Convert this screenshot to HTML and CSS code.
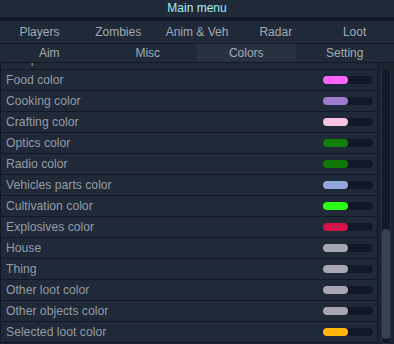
FILE: index.html
```html
<!DOCTYPE html>
<html>
<head>
	<title>Main menu</title>
	<link rel="stylesheet" href="styles.css">
</head>
<body>
	<div id="title">Main menu</div>

	<div class="tabs tabs_top">
		<div class="tab">Players</div>
		<div class="tab">Zombies</div>
		<div class="tab">Anim &amp; Veh</div>
		<div class="tab">Radar</div>
		<div class="tab">Loot</div>
	</div>
	<div class="tabs tabs_bottom">
		<div class="tab">Aim</div>
		<div class="tab">Misc</div>
		<div class="tab active">Colors</div>
		<div class="tab">Setting</div>
	</div>

	<div id="panel">
		<div id="list">
			<div class="row"><span>Weapon color</span><span class="track"><span class="fill" style="background:#d0d0d0"></span></span></div>
			<div class="row"><span>Food color</span><span class="track"><span class="fill" style="background:#ff66f7"></span></span></div>
			<div class="row"><span>Cooking color</span><span class="track"><span class="fill" style="background:#9b7ccc"></span></span></div>
			<div class="row"><span>Crafting color</span><span class="track"><span class="fill" style="background:#f7c3e3"></span></span></div>
			<div class="row"><span>Optics color</span><span class="track"><span class="fill" style="background:#137f0a"></span></span></div>
			<div class="row"><span>Radio color</span><span class="track"><span class="fill" style="background:#107a08"></span></span></div>
			<div class="row"><span>Vehicles parts color</span><span class="track"><span class="fill" style="background:#8ea6d8"></span></span></div>
			<div class="row"><span>Cultivation color</span><span class="track"><span class="fill" style="background:#2cfb12"></span></span></div>
			<div class="row"><span>Explosives color</span><span class="track"><span class="fill" style="background:#d6124c"></span></span></div>
			<div class="row"><span>House</span><span class="track"><span class="fill" style="background:#a9a6b4"></span></span></div>
			<div class="row"><span>Thing</span><span class="track"><span class="fill" style="background:#a9a6b4"></span></span></div>
			<div class="row"><span>Other loot color</span><span class="track"><span class="fill" style="background:#a9a6b4"></span></span></div>
			<div class="row"><span>Other objects color</span><span class="track"><span class="fill" style="background:#a9a6b4"></span></span></div>
			<div class="row"><span>Selected loot color</span><span class="track"><span class="fill" style="background:#ffb70a"></span></span></div>
		</div>
		<div id="scrollbar"><div id="thumb"></div></div>
	</div>
</body>
</html>
```

FILE: styles.css
```css
html, body {
	margin: 0;
	height: 100%;
	overflow: hidden;
}

body {
	background-color: #1a2330;
	font-family: "Liberation Sans", Arial, sans-serif;
	color: #959ca6;
}

#title {
	height: 17px;
	line-height: 17px;
	text-align: center;
	font-size: 12px;
	color: #a5eef5;
	background-color: #1f2937;
	border-bottom: 4px solid #111827;
}

.tabs {
	display: grid;
	background-color: #1f2937;
	border-bottom: 1px solid #111827;
}

.tabs_top {
	grid-template-columns: repeat(5, 1fr);
	height: 22px;
}

.tabs_bottom {
	grid-template-columns: repeat(4, 1fr);
	height: 18px;
}

.tab {
	display: flex;
	align-items: center;
	justify-content: center;
	font-size: 12px;
	color: #a2abb6;
}

.tab.active {
	background-color: #27313f;
}

#panel {
	display: flex;
	height: 281px;
	overflow: hidden;
}

#list {
	width: 379px;
	margin-top: -14px;
}

.row {
	display: flex;
	align-items: center;
	justify-content: space-between;
	height: 20px;
	padding: 0 4px 0 5px;
	font-size: 12.2px;
	background-color: #1f2937;
	border: 1px solid #111827;
	border-top: none;
}

.track {
	display: block;
	width: 50px;
	height: 8px;
	border-radius: 4px;
	background-color: #111827;
}

.fill {
	display: block;
	width: 25px;
	height: 8px;
	border-radius: 4px;
}

#scrollbar {
	display: flex;
	flex-direction: column;
	justify-content: flex-end;
	width: 8px;
	margin: 5px 3px 0 3px;
	padding: 0 0 4px 0;
	background-color: #111827;
	border: 1px solid #263140;
	border-radius: 4px;
}

#thumb {
	height: 110px;
	border-radius: 4px;
	background-color: #374151;
}
```
